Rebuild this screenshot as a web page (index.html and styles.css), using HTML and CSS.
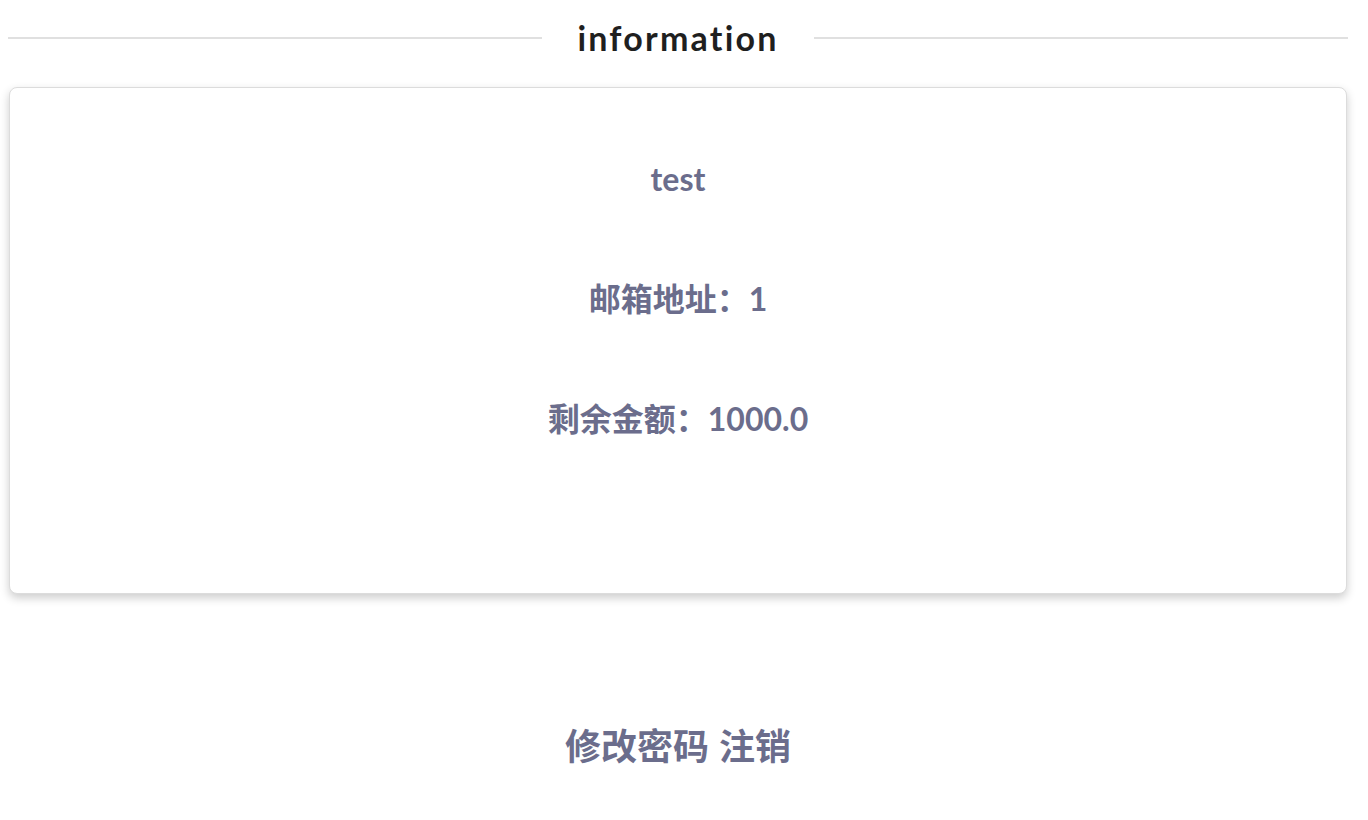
FILE: index.html
```html
<!DOCTYPE html>
<html>
<head>
<meta charset="utf-8">
<link rel="stylesheet" href="styles.css">
</head>
<body>
<div class="divider">
  <span class="line"></span>
  <h2 class="title">information</h2>
  <span class="line"></span>
</div>
<div class="card">
  <p class="item">test</p>
  <p class="item">邮箱地址：1</p>
  <p class="item">剩余金额：1000.0</p>
</div>
<div class="actions">
  <a class="action">修改密码</a>
  <a class="action">注销</a>
</div>
</body>
</html>
```

FILE: styles.css
```css
html, body {
  margin: 0;
  background: #ffffff;
}
body {
  padding: 0 20px 0 8px;
  font-family: Lato, "Noto Sans CJK SC", sans-serif;
}
.divider {
  display: flex;
  align-items: center;
  gap: 35px;
  height: 76px;
}
.line {
  flex: 1;
  height: 2px;
  background: #e0e0e0;
}
.title {
  margin: 0;
  font-size: 34px;
  font-weight: 700;
  letter-spacing: 2.2px;
  color: #1f1f1f;
  line-height: 1;
}
.card {
  margin: 11px 1px 0 1px;
  height: 507px;
  border: 1px solid #dcdcdc;
  border-radius: 8px;
  box-shadow: 0 4px 10px rgba(0, 0, 0, 0.2);
  background: #fff;
  display: flex;
  flex-direction: column;
  align-items: center;
  padding-top: 73px;
  box-sizing: border-box;
  gap: 84px;
}
.item {
  margin: 0;
  font-size: 32px;
  line-height: 36px;
  font-weight: 700;
  color: #6b6d8c;
}
.actions {
  display: flex;
  justify-content: center;
  gap: 10px;
  margin-top: 130px;
}
.action {
  font-size: 36px;
  line-height: 44px;
  font-weight: 700;
  color: #6b6d8c;
  cursor: pointer;
}
```
